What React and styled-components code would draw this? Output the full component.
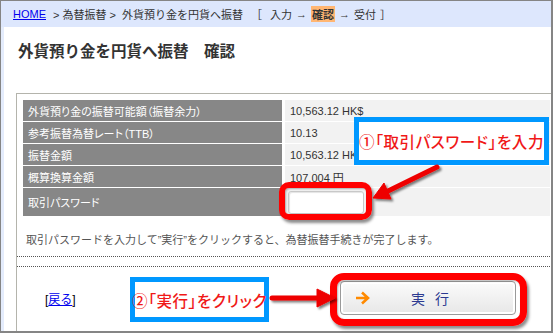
import styled, { createGlobalStyle } from 'styled-components';

const GlobalStyle = createGlobalStyle`
  html, body {
    margin: 0;
    padding: 0;
    background: #fff;
  }
  body {
    font-family: "Liberation Sans", "Noto Sans CJK JP", sans-serif;
  }
`;

const Page = styled.div`
  position: relative;
  width: 553px;
  height: 333px;
  overflow: hidden;
`;

const Frame = styled.div`
  box-sizing: border-box;
  width: 553px;
  height: 333px;
  border: 1px solid #858585;
  border-right-width: 2px;
  border-bottom-width: 2px;
  display: flex;
  flex-direction: column;
  background: #fff;
`;

const Crumbs = styled.div`
  height: 26px;
  flex-shrink: 0;
  display: flex;
  align-items: center;
  padding-left: 12px;
  background: #dde7fd;
  font-size: 11px;
  color: #333;
  white-space: nowrap;
`;

const HomeLink = styled.a`
  color: #0000ee;
  text-decoration: underline;
  margin-right: 7px;
`;

const Sep = styled.span`
  margin: 0 ${(p) => p.$gap || 4}px;
`;

const Current = styled.span`
  background: #ffb673;
  font-weight: bold;
  padding: 0 1px;
`;

const Body = styled.div`
  flex: 1;
  display: flex;
  flex-direction: column;
  border-left: 3px solid #e4ecfc;
`;

const Title = styled.h1`
  margin: 15px 0 0 14px;
  font-size: 15.5px;
  line-height: 20px;
  font-weight: bold;
  color: #333;
`;

const Box = styled.section`
  flex: 1;
  margin: 31px 0 0 12px;
  border-left: 1px solid #b4b4ac;
  border-top: 1px solid #b4b4ac;
  padding-top: 6px;
  display: flex;
  flex-direction: column;
`;

const Table = styled.div`
  display: grid;
  grid-template-columns: 259px 1fr;
  grid-template-rows: repeat(4, 21px) 28px;
  column-gap: 3px;
  row-gap: 1px;
  margin: 0 1px 0 6px;
`;

const Label = styled.div`
  display: flex;
  align-items: center;
  padding-left: 5px;
  background: #878787;
  color: #fff;
  font-size: 11px;
  font-feature-settings: "palt";
`;

const Value = styled.div`
  display: flex;
  align-items: center;
  padding-left: ${(p) => (p.$input ? 3 : 5)}px;
  background: #f2f2f2;
  color: #333;
  font-size: 11px;
`;

const PassInput = styled.input`
  box-sizing: border-box;
  width: 76px;
  height: 23px;
  border: 1px solid #c8c8c8;
  border-radius: 3px;
  background: #fff;
  box-shadow: inset 1px 1px 1px #e4e4e4;
  outline: none;
`;

const Note = styled.p`
  margin: 17px 0 0 9px;
  font-size: 11px;
  line-height: 14px;
  color: #555;
`;

const Dotted = styled.div`
  margin: 9px 1px 0 0;
  height: 9px;
  border-top: 1px dotted #555;
  border-bottom: 1px dotted #555;
`;

const Actions = styled.div`
  display: flex;
  align-items: center;
  padding: 14px 35px 0 28px;
`;

const Back = styled.span`
  font-size: 12px;
  color: #000;
  a {
    color: #0000ee;
    text-decoration: underline;
  }
`;

const ExecButton = styled.button`
  box-sizing: border-box;
  margin-left: auto;
  width: 176px;
  height: 34px;
  display: grid;
  grid-template-columns: 1fr auto 1fr;
  align-items: center;
  border: 1px solid #9a9a9a;
  border-radius: 4px;
  background: linear-gradient(#fbfbfb, #e7e7e7);
  box-shadow: inset 0 0 0 2px #fff;
  font-family: "Noto Sans CJK JP", sans-serif;
  font-size: 14px;
  color: #2b3990;
  letter-spacing: 10px;
  padding: 0 0 0 14px;
  svg {
    justify-self: start;
  }
`;

const RedFrame = styled.div`
  position: absolute;
  box-sizing: border-box;
  left: ${(p) => p.$x}px;
  top: ${(p) => p.$y}px;
  width: ${(p) => p.$w}px;
  height: ${(p) => p.$h}px;
  border: ${(p) => p.$t}px solid #ff0000;
  border-radius: ${(p) => p.$r}px;
  box-shadow: 2px 3px 3px rgba(0, 0, 0, 0.45), inset 1px 1px 2px rgba(0, 0, 0, 0.3);
`;

const Callout = styled.div`
  position: absolute;
  box-sizing: border-box;
  left: ${(p) => p.$x}px;
  top: ${(p) => p.$y}px;
  width: ${(p) => p.$w}px;
  height: ${(p) => p.$h}px;
  border: 5px solid #0098ff;
  background: #fff;
  display: flex;
  align-items: center;
  justify-content: center;
  font-family: "Noto Sans CJK JP", sans-serif;
  font-size: 15.5px;
  font-weight: 500;
  font-feature-settings: "palt";
  letter-spacing: 0.6px;
  color: #f01818;
  white-space: nowrap;
`;

const Arrows = styled.svg`
  position: absolute;
  left: 0;
  top: 0;
  pointer-events: none;
`;

const rows = [
  ['外貨預り金の振替可能額（振替余力）', '10,563.12 HK$'],
  ['参考振替為替レート（TTB）', '10.13'],
  ['振替金額', '10,563.12 HK$'],
  ['概算換算金額', '107,004 円'],
];

export default function App() {
  return (
    <Page>
      <GlobalStyle />
      <Frame>
        <Crumbs>
          <HomeLink href="#">HOME</HomeLink>
          <span>&gt; 為替振替 &gt;&nbsp; 外貨預り金を円貨へ振替</span>
          <Sep $gap={8}>［</Sep>
          <span>入力</span>
          <Sep>→</Sep>
          <Current>確認</Current>
          <Sep>→</Sep>
          <span>受付</span>
          <Sep>］</Sep>
        </Crumbs>
        <Body>
          <Title>外貨預り金を円貨へ振替　確認</Title>
          <Box>
            <Table>
              {rows.map(([label, value]) => (
                <>
                  <Label key={label}>{label}</Label>
                  <Value key={label + 'v'}>{value}</Value>
                </>
              ))}
              <Label>取引パスワード</Label>
              <Value $input>
                <PassInput type="password" />
              </Value>
            </Table>
            <Note>取引パスワードを入力して”実行”をクリックすると、為替振替手続きが完了します。</Note>
            <Dotted />
            <Actions>
              <Back>
                [<a href="#">戻る</a>]
              </Back>
              <ExecButton>
                <svg width="15" height="14" viewBox="0 0 15 14">
                  <path d="M1 7h12M7 1.5 13 7l-6 5.5" fill="none" stroke="#ff8a00" strokeWidth="2.6" />
                </svg>
                <span>実行</span>
                <span />
              </ExecButton>
            </Actions>
          </Box>
        </Body>
      </Frame>

      <RedFrame $x={279} $y={182} $w={93} $h={38} $t={6} $r={10} />
      <RedFrame $x={330} $y={273} $w={197} $h={53} $t={7} $r={14} />
      <Callout $x={354} $y={117} $w={195} $h={48}>①「取引パスワード」を入力</Callout>
      <Callout $x={130} $y={277} $w={139} $h={45}>②「実行」をクリック</Callout>

      <Arrows width="553" height="333" viewBox="0 0 553 333">
        <defs>
          <filter id="sh" x="-20%" y="-20%" width="140%" height="140%">
            <feDropShadow dx="2" dy="2" stdDeviation="1.2" floodOpacity="0.5" />
          </filter>
        </defs>
        <g filter="url(#sh)" fill="#ee0000" stroke="#ee0000">
          <line x1="437" y1="167" x2="386" y2="192" strokeWidth="5" strokeLinecap="round" />
          <polygon points="373,198 391,199 384,183" strokeWidth="1" />
          <line x1="272" y1="298" x2="320" y2="298" strokeWidth="5" strokeLinecap="round" />
          <polygon points="335,298 317,289 317,307" strokeWidth="1" />
        </g>
      </Arrows>
    </Page>
  );
}
